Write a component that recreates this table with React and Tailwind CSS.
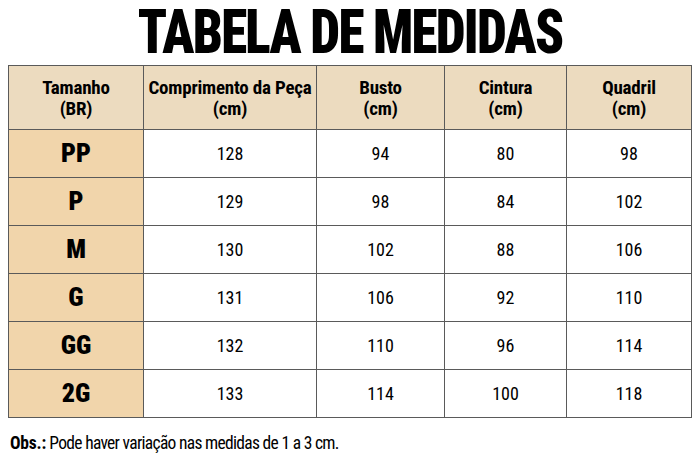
const COLS = ["w-[135px]", "w-[173px]", "w-[128px]", "w-[122px]", "w-[125px]"];

const HEADERS = [
  ["Tamanho", "(BR)"],
  ["Comprimento da Peça", "(cm)"],
  ["Busto", "(cm)"],
  ["Cintura", "(cm)"],
  ["Quadril", "(cm)"],
];

const ROWS = [
  ["PP", 128, 94, 80, 98],
  ["P", 129, 98, 84, 102],
  ["M", 130, 102, 88, 106],
  ["G", 131, 106, 92, 110],
  ["GG", 132, 110, 96, 114],
  ["2G", 133, 114, 100, 118],
];

const font = "font-['Roboto',sans-serif] font-stretch-[75%]";

export default function App() {
  return (
    <div className={`w-[700px] h-[467px] bg-white text-black ${font}`}>
      <div className="flex justify-center">
        <h1 className="px-[4px] text-[61px] leading-[64px] font-black tracking-[-2px] scale-x-[0.87] whitespace-nowrap">
          TABELA DE MEDIDAS
        </h1>
      </div>

      <table className="ml-[8px] mt-[1px] border-collapse table-fixed">
        <thead>
          <tr className="h-[64px] bg-[#ecdbbf]">
            {HEADERS.map(([a, b], i) => (
              <th
                key={a}
                className={`${COLS[i]} border border-[#5a5a5a] text-[19px] leading-[21px] font-bold tracking-[-0.2px] text-center align-middle`}
              >
                <div>{a}</div>
                <div>{b}</div>
              </th>
            ))}
          </tr>
        </thead>
        <tbody>
          {ROWS.map(([size, ...vals]) => (
            <tr key={size} className="h-[48px]">
              <td className="border border-[#5a5a5a] bg-[#f1d5ab] text-center text-[26px] font-black">
                {size}
              </td>
              {vals.map((v, i) => (
                <td key={i} className="border border-[#5a5a5a] text-center text-[18px]">
                  {v}
                </td>
              ))}
            </tr>
          ))}
        </tbody>
      </table>

      <p className="ml-[10px] mt-[15px] text-[17.5px] leading-[20px] tracking-[-0.7px]">
        <span className="font-bold tracking-[-0.2px]">Obs.:</span> Pode haver variação nas medidas de 1 a 3 cm.
      </p>
    </div>
  );
}
